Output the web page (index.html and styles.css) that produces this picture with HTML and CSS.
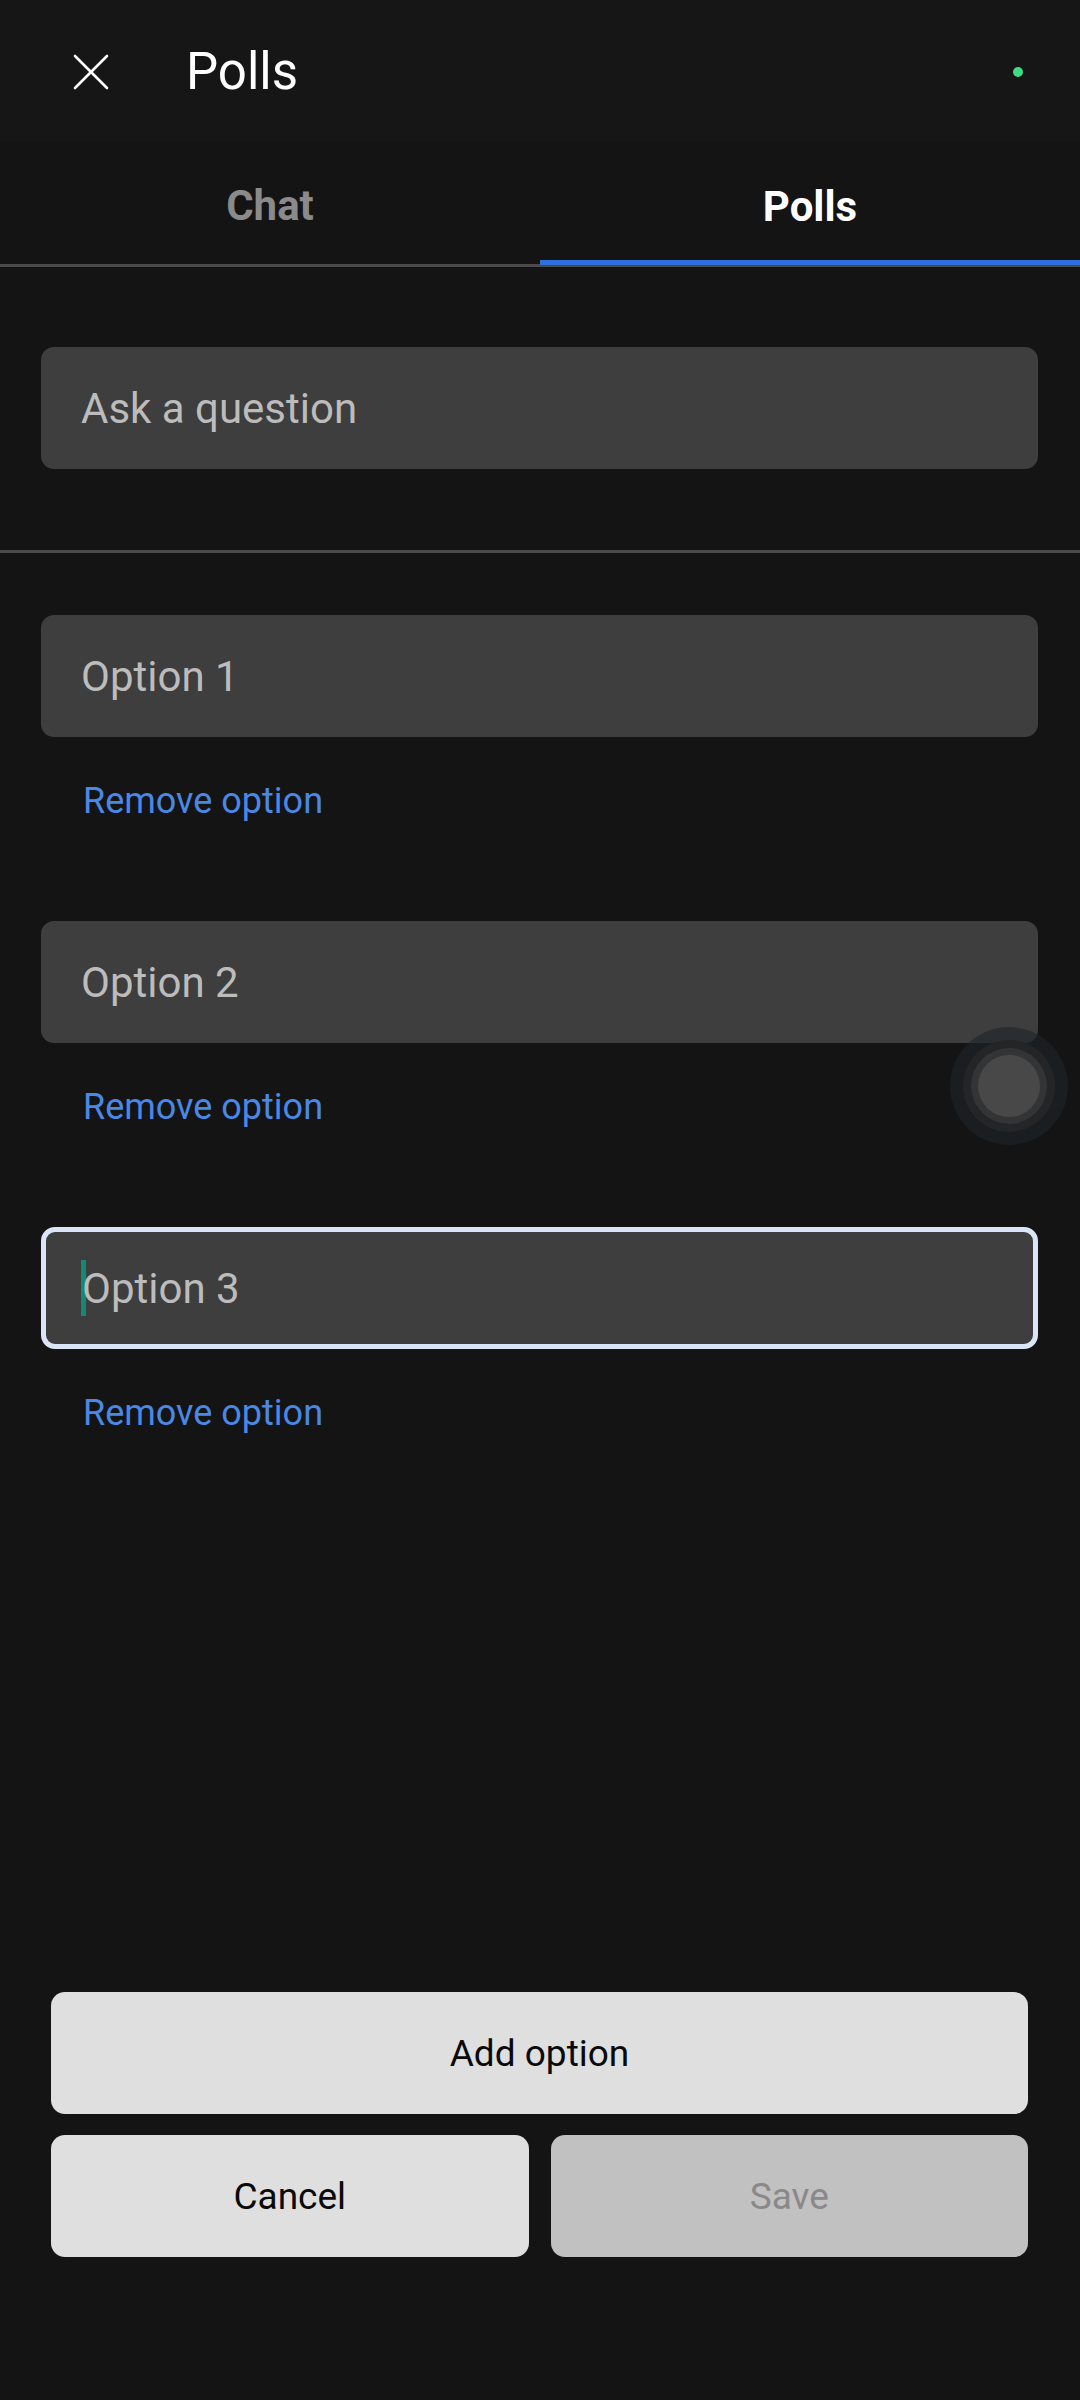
FILE: index.html
```html
<!DOCTYPE html>
<html>
<head>
<meta charset="utf-8">
<link rel="stylesheet" href="styles.css">
</head>
<body>
<div class="screen">
  <header class="topbar">
    <svg class="close-icon" viewBox="0 0 36 36" width="36" height="36">
      <path d="M2 2 L34 34 M34 2 L2 34" stroke="#ffffff" stroke-width="2.6" stroke-linecap="round" fill="none"/>
    </svg>
    <h1 class="title">Polls</h1>
    <span class="status-dot"></span>
  </header>

  <nav class="tabs">
    <div class="tab">Chat</div>
    <div class="tab tab-active">Polls</div>
  </nav>

  <section class="question-section">
    <div class="field">Ask a question</div>
  </section>

  <section class="options">
    <div class="option">
      <div class="field">Option 1</div>
      <div class="remove">Remove option</div>
    </div>
    <div class="option">
      <div class="field">Option 2</div>
      <div class="remove">Remove option</div>
    </div>
    <div class="option">
      <div class="field field-focused"><span class="caret"></span>Option 3</div>
      <div class="remove">Remove option</div>
    </div>
  </section>

  <footer class="actions">
    <button class="btn btn-wide">Add option</button>
    <div class="btn-row">
      <button class="btn">Cancel</button>
      <button class="btn btn-disabled">Save</button>
    </div>
  </footer>

  <div class="assist-touch">
    <div class="assist-ring2">
      <div class="assist-ring3">
        <div class="assist-core"></div>
      </div>
    </div>
  </div>
</div>
</body>
</html>
```

FILE: styles.css
```css
html, body {
  margin: 0;
  padding: 0;
  background: #141414;
}

.screen {
  position: relative;
  width: 1080px;
  height: 2400px;
  display: flex;
  flex-direction: column;
  font-family: Roboto, "Noto Sans", Arial, sans-serif;
  background: #141414;
  overflow: hidden;
}

.topbar {
  height: 143px;
  background: #161616;
  display: flex;
  align-items: center;
  padding-left: 73px;
  padding-right: 57px;
  box-sizing: border-box;
}

.close-icon {
  display: block;
}

.title {
  margin: 0 0 0 77px;
  font-size: 51px;
  font-weight: 400;
  color: #ffffff;
  flex: 1;
  line-height: 1;
}

.status-dot {
  width: 10px;
  height: 10px;
  border-radius: 50%;
  background: #3ddc84;
}

.tabs {
  display: flex;
  height: 124px;
  border-bottom: 3px solid #4a4a4a;
  box-sizing: border-box;
}

.tab {
  flex: 1;
  display: flex;
  align-items: center;
  justify-content: center;
  font-size: 42px;
  font-weight: 700;
  color: #8a8a8a;
  box-sizing: border-box;
  padding-top: 4px;
}

.tab-active {
  color: #ffffff;
  border-bottom: 5px solid #2f6fdb;
  padding-top: 9px;
  margin-bottom: -1px;
}

.question-section {
  padding: 80px 42px 81px 41px;
  border-bottom: 3px solid #4a4a4a;
}

.field {
  height: 122px;
  box-sizing: border-box;
  background: #3e3e3e;
  border-radius: 13px;
  display: flex;
  align-items: center;
  padding-left: 40px;
  font-size: 42px;
  color: #bcbcbc;
}

.field-focused {
  border: 5px solid #dae5f8;
  padding-left: 35px;
  border-radius: 14px;
}

.caret {
  display: inline-block;
  width: 5px;
  height: 56px;
  background: #128a76;
  margin-right: -4px;
}

.options {
  padding: 62px 42px 0 41px;
  display: flex;
  flex-direction: column;
}

.option {
  margin-bottom: 62px;
}

.remove {
  height: 122px;
  box-sizing: border-box;
  padding-top: 6px;
  display: flex;
  align-items: center;
  padding-left: 42px;
  font-size: 36px;
  color: #4a88e6;
}

.actions {
  margin-top: auto;
  padding: 0 52px 143px 51px;
  display: flex;
  flex-direction: column;
  gap: 21px;
}

.btn-row {
  display: flex;
  gap: 22px;
}

.btn {
  flex: 1;
  height: 122px;
  border: none;
  border-radius: 14px;
  background: #dfdfdf;
  font-family: Roboto, "Noto Sans", Arial, sans-serif;
  font-size: 37px;
  font-weight: 400;
  color: #0a0a0a;
  padding: 0;
}

.btn-wide {
  flex: none;
  width: 100%;
}

.btn-disabled {
  background: #c1c1c1;
  color: #898989;
}

.assist-touch {
  position: absolute;
  left: 950px;
  top: 1027px;
  width: 118px;
  height: 118px;
  border-radius: 50%;
  background: rgba(30, 36, 40, 0.6);
  display: flex;
  align-items: center;
  justify-content: center;
}

.assist-ring2 {
  width: 92px;
  height: 92px;
  border-radius: 50%;
  background: #232526;
  display: flex;
  align-items: center;
  justify-content: center;
}

.assist-ring3 {
  width: 76px;
  height: 76px;
  border-radius: 50%;
  background: #333435;
  display: flex;
  align-items: center;
  justify-content: center;
}

.assist-core {
  width: 62px;
  height: 62px;
  border-radius: 50%;
  background: #484848;
}
```
